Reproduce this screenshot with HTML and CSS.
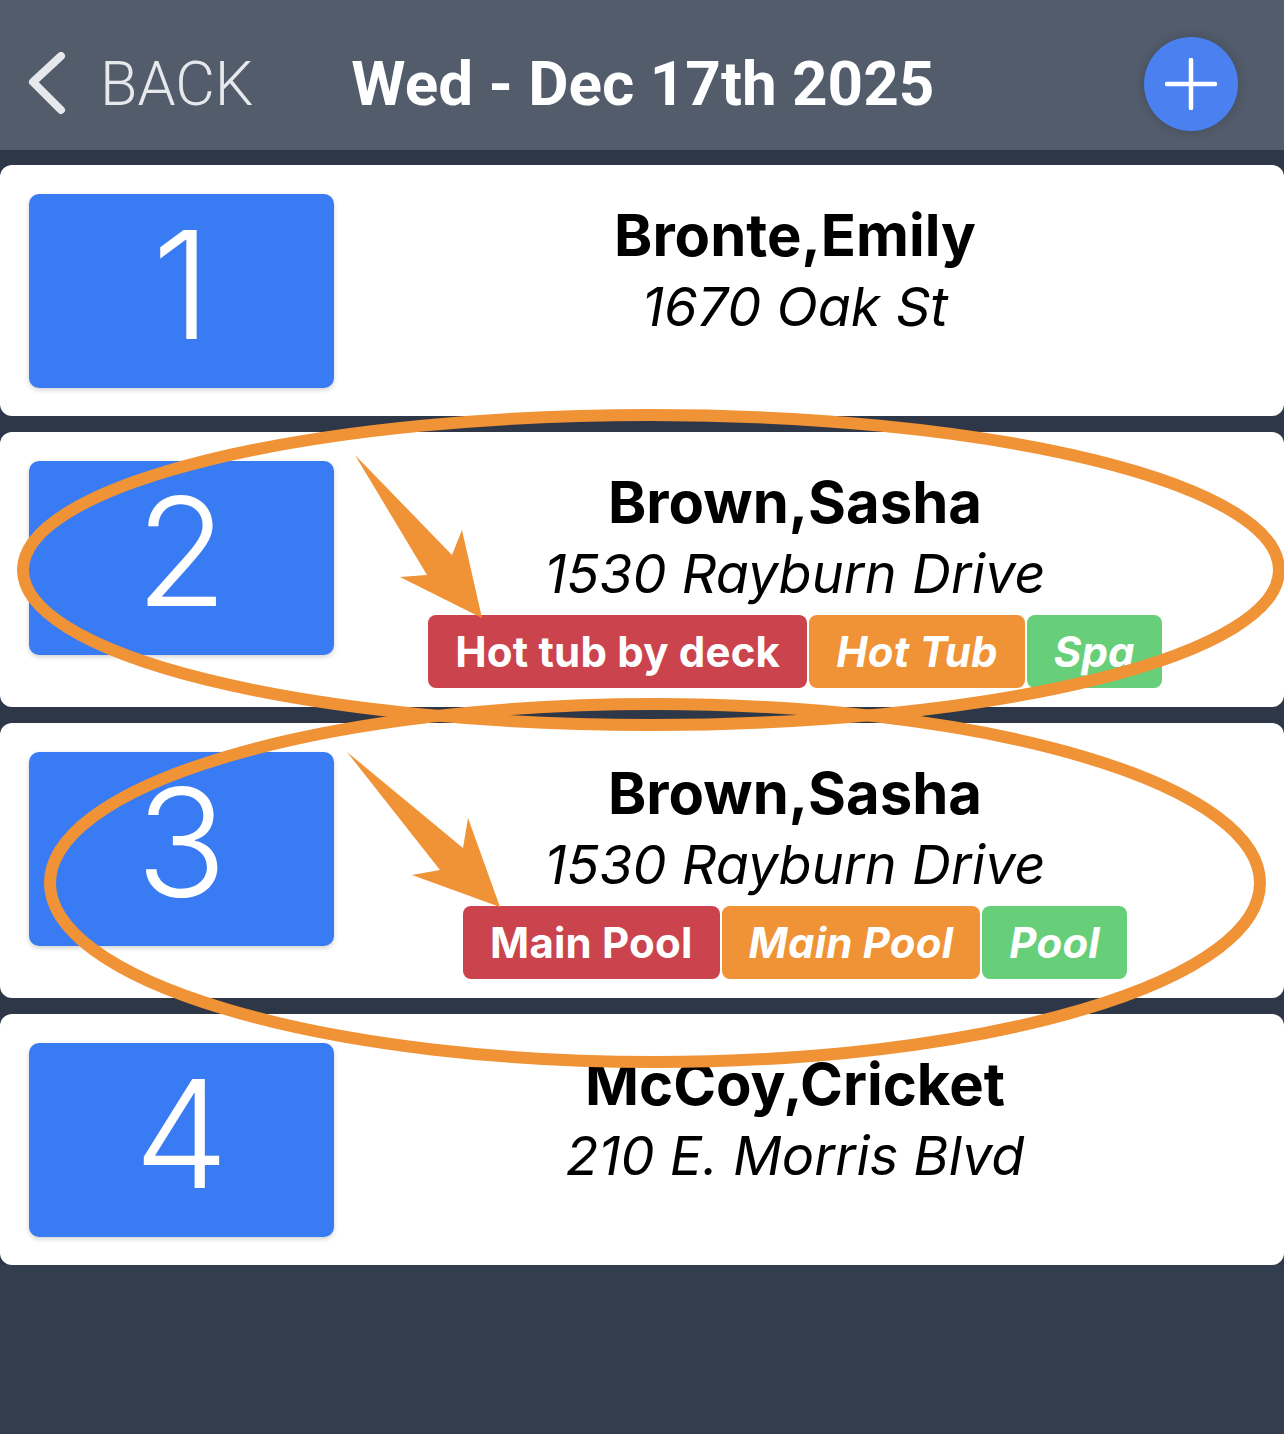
FILE: index.html
```html
<!DOCTYPE html>
<html lang="en">
<head>
<meta charset="utf-8">
<title>Wed - Dec 17th 2025</title>
<link rel="stylesheet" href="styles.css">
</head>
<body>
<div class="page">
  <header class="header">
    <div class="back">
      <svg class="chev" width="40" height="64" viewBox="0 0 40 64"><polyline points="33,4 5,30 33,58" fill="none" stroke="#e6e8ec" stroke-width="8" stroke-linecap="round" stroke-linejoin="round"/></svg>
      <span class="back-text">BACK</span>
    </div>
    <h1 class="title">Wed - Dec 17th 2025</h1>
    <button class="add" aria-label="Add">
      <svg width="52" height="52" viewBox="0 0 52 52"><path d="M26 2V50M2 26H50" stroke="#fff" stroke-width="4.5" stroke-linecap="round"/></svg>
    </button>
  </header>

  <main class="list">
    <section class="card">
      <div class="num">1</div>
      <div class="info">
        <div class="name">Bronte,Emily</div>
        <div class="addr">1670 Oak St</div>
      </div>
    </section>

    <section class="card">
      <div class="num">2</div>
      <div class="info">
        <div class="name">Brown,Sasha</div>
        <div class="addr">1530 Rayburn Drive</div>
        <div class="tags">
          <span class="tag red">Hot tub by deck</span>
          <span class="tag orange">Hot Tub</span>
          <span class="tag green">Spa</span>
        </div>
      </div>
    </section>

    <section class="card">
      <div class="num">3</div>
      <div class="info">
        <div class="name">Brown,Sasha</div>
        <div class="addr">1530 Rayburn Drive</div>
        <div class="tags">
          <span class="tag red">Main Pool</span>
          <span class="tag orange">Main Pool</span>
          <span class="tag green">Pool</span>
        </div>
      </div>
    </section>

    <section class="card">
      <div class="num">4</div>
      <div class="info">
        <div class="name">McCoy,Cricket</div>
        <div class="addr">210 E. Morris Blvd</div>
      </div>
    </section>
  </main>

  <svg class="annot" width="1284" height="1434" viewBox="0 0 1284 1434">
    <ellipse cx="651" cy="570" rx="628" ry="155" fill="none" stroke="#f09236" stroke-width="12"/>
    <ellipse cx="655" cy="883" rx="605" ry="179" fill="none" stroke="#f09236" stroke-width="12"/>
    <polygon points="355,455 452,555 462,530 482,618 400,577 427,575" fill="#f09236"/>
    <polygon points="347,752 463,848 468,818 500,907 412,875 440,870" fill="#f09236"/>
  </svg>
</div>
</body>
</html>
```

FILE: styles.css
```css
* { box-sizing: border-box; }

html, body {
  margin: 0;
  padding: 0;
}

body {
  background: #323d4e;
  font-family: "Inter", "Liberation Sans", sans-serif;
}

.page {
  position: relative;
  width: 1284px;
  min-height: 1434px;
  overflow: hidden;
}

.header {
  height: 150px;
  background: #525c6b;
  display: flex;
  align-items: center;
  padding: 18px 46px 0 28px;
}

.back {
  display: flex;
  align-items: center;
  gap: 32px;
}

.chev { display: block; }

.back-text {
  font-family: "Roboto", "Liberation Sans", sans-serif;
  font-weight: 300;
  font-size: 61px;
  color: #e6e8ec;
  line-height: 1;
}

.title {
  margin: 0 0 0 98px;
  font-family: "Roboto", "Liberation Sans", sans-serif;
  font-weight: 700;
  font-size: 62px;
  color: #ffffff;
  line-height: 1;
}

.add {
  margin-left: auto;
  width: 94px;
  height: 94px;
  border-radius: 50%;
  border: none;
  padding: 0;
  background: #4b80f1;
  display: flex;
  align-items: center;
  justify-content: center;
  box-shadow: 0 0 12px rgba(0, 0, 0, 0.18);
}

.add svg { display: block; }

.list {
  background: #2d3748;
  padding-top: 15px;
  display: flex;
  flex-direction: column;
  gap: 16px;
}

.card {
  background: #ffffff;
  border-radius: 12px;
  display: flex;
  align-items: flex-start;
}

.num {
  flex: none;
  width: 305px;
  height: 194px;
  margin: 29px 0 28px 29px;
  border-radius: 10px;
  background: #397bf2;
  box-shadow: 0 2px 5px rgba(0, 0, 0, 0.18);
  color: #ffffff;
  font-family: "Inter", "Liberation Sans", sans-serif;
  font-weight: 300;
  font-size: 150px;
  display: flex;
  align-items: center;
  justify-content: center;
  padding-bottom: 14px;
}

.info {
  flex: 1;
  margin-right: 28px;
  padding: 37px 0 19px;
  text-align: center;
  color: #000000;
}

.name {
  font-weight: 700;
  font-size: 58px;
  line-height: 67px;
}

.addr {
  font-style: italic;
  font-weight: 400;
  font-size: 54px;
  line-height: 76px;
}

.tags {
  margin-top: 3px;
  display: flex;
  justify-content: center;
  gap: 2px;
}

.tag {
  height: 73px;
  line-height: 73px;
  padding: 0 27px;
  border-radius: 8px;
  color: #ffffff;
  font-weight: 700;
  font-size: 42px;
  letter-spacing: 0.2px;
  white-space: nowrap;
}

.tag.red { background: #cb444d; }
.tag.orange { background: #f09236; font-style: italic; }
.tag.green { background: #67cf7a; font-style: italic; }

.annot {
  position: absolute;
  top: 0;
  left: 0;
  pointer-events: none;
}
```
